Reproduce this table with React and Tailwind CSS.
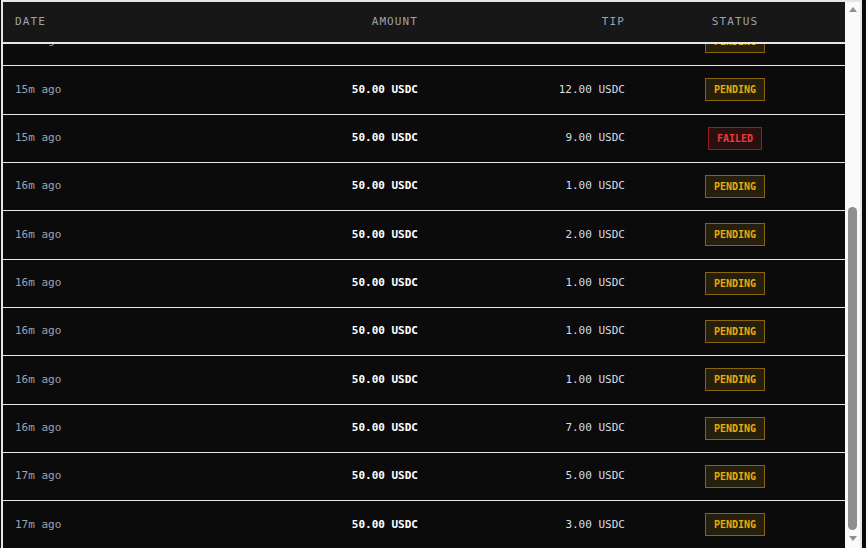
import { useLayoutEffect, useRef } from 'react';

const ROWS = [
  { when: '13m ago', tip: '4.00', status: 'pending' },
  { when: '13m ago', tip: '2.00', status: 'pending' },
  { when: '14m ago', tip: '6.00', status: 'pending' },
  { when: '14m ago', tip: '1.00', status: 'failed' },
  { when: '14m ago', tip: '3.00', status: 'pending' },
  { when: '15m ago', tip: '8.00', status: 'pending' },
  { when: '15m ago', tip: '11.00', status: 'pending' },
  { when: '15m ago', tip: '12.00', status: 'pending' },
  { when: '15m ago', tip: '9.00', status: 'failed' },
  { when: '16m ago', tip: '1.00', status: 'pending' },
  { when: '16m ago', tip: '2.00', status: 'pending' },
  { when: '16m ago', tip: '1.00', status: 'pending' },
  { when: '16m ago', tip: '1.00', status: 'pending' },
  { when: '16m ago', tip: '1.00', status: 'pending' },
  { when: '16m ago', tip: '7.00', status: 'pending' },
  { when: '17m ago', tip: '5.00', status: 'pending' },
  { when: '17m ago', tip: '3.00', status: 'pending' },
];

const GRID = 'grid grid-cols-[227px_200px_207px_1fr] items-center';

function StatusBadge({ status }) {
  if (status === 'failed') {
    return (
      <span className="inline-block border border-[#9b1c1c] bg-[#2a0f10] px-2 py-[3px] text-[10px] font-bold leading-[15px] text-[#ef3b3b]">
        FAILED
      </span>
    );
  }
  return (
    <span className="inline-block border border-[#8a6408] bg-[#261f0b] px-2 py-[3px] text-[10px] font-bold leading-[15px] text-[#e8aa0a]">
      PENDING
    </span>
  );
}

// drawn scrollbar, the headless browser hides the native one
function ScrollBar() {
  return (
    <div className="flex w-[15px] shrink-0 flex-col bg-[#fafafa] pb-[4px]">
      <div className="flex h-[15px] items-center justify-center">
        <div className="h-0 w-0 border-x-[4px] border-b-[5px] border-x-transparent border-b-[#8f8f8f]" />
      </div>
      <div className="flex flex-1 flex-col justify-end px-[3px] pb-px">
        <div className="h-[323px] rounded-[5px] bg-[#8f8f8f]" />
      </div>
      <div className="flex h-[15px] items-center justify-center">
        <div className="h-0 w-0 border-x-[4px] border-t-[5px] border-x-transparent border-t-[#8f8f8f]" />
      </div>
    </div>
  );
}

export default function App() {
  const boxRef = useRef(null);

  useLayoutEffect(() => {
    if (boxRef.current) boxRef.current.scrollTop = boxRef.current.scrollHeight;
  }, []);

  return (
    <div className="h-[548px] overflow-hidden bg-[#0a0a0a] pl-px font-['DejaVu_Sans_Mono',monospace] text-[11px]">
      <div className="flex h-[552px] w-[861px] border-2 border-[#e6e6e6] bg-[#0b0b0b]">
        <div
          ref={boxRef}
          className="h-full flex-1 overflow-y-scroll [scrollbar-width:none] [&::-webkit-scrollbar]:hidden"
        >
          <div className={`${GRID} sticky top-0 z-10 h-[42px] border-b-2 border-[#e6e6e6] bg-[#171717] tracking-[0.1em] text-[#9ca3af]`}>
            <div className="pl-3">DATE</div>
            <div className="pr-3 text-right">AMOUNT</div>
            <div className="pr-3 text-right">TIP</div>
            <div className="pl-3 pr-6 text-center">STATUS</div>
          </div>
          {ROWS.map((r, i) => (
            <div key={i} className={`${GRID} h-[48.33px] border-b border-[#e6e6e6]`}>
              <div className="pl-3 text-[#9ca3af]">{r.when}</div>
              <div className="pr-3 text-right font-bold text-white">50.00 USDC</div>
              <div className="pr-3 text-right text-[#d8dde3]">{r.tip} USDC</div>
              <div className="pl-3 pr-6 text-center">
                <StatusBadge status={r.status} />
              </div>
            </div>
          ))}
        </div>
        <ScrollBar />
      </div>
    </div>
  );
}
